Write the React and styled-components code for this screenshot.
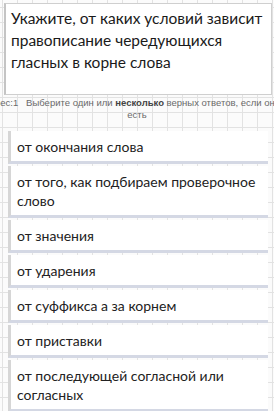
import styled, { createGlobalStyle } from "styled-components";

const GlobalStyle = createGlobalStyle`
  html, body {
    margin: 0;
    padding: 0;
  }
  body {
    width: 274px;
    min-height: 411px;
    overflow: hidden;
    font-family: "Open Sans", "Noto Sans", sans-serif;
    background-color: #fbfbfb;
    background-image:
      linear-gradient(to right, #e2e2e2 1px, transparent 1px),
      linear-gradient(to bottom, #e2e2e2 1px, transparent 1px);
    background-size: 15px 15px;
    background-position: 2px 7px;
  }
`;

const answers = [
  "от окончания слова",
  "от того, как подбираем проверочное слово",
  "от значения",
  "от ударения",
  "от суффикса а за корнем",
  "от приставки",
  "от последующей согласной или согласных",
];

export default function App() {
  return (
    <>
      <GlobalStyle />
      <Page>
        <Question>
          Укажите, от каких условий зависит правописание чередующихся гласных в
          корне слова
        </Question>
        <Hint>
          Вес:1&nbsp;&nbsp; Выберите один или <b>несколько</b> верных ответов,
          если они
          <br />
          есть
        </Hint>
        <Answers>
          {answers.map((text) => (
            <Answer key={text}>{text}</Answer>
          ))}
        </Answers>
      </Page>
    </>
  );
}

const Page = styled.div`
  display: flex;
  flex-direction: column;
  padding-top: 3px;
`;

const Question = styled.div`
  box-sizing: border-box;
  margin-left: 4px;
  width: 268px;
  height: 92px;
  padding: 3px 6px 0 5px;
  background: #fff;
  border: 1px solid #cfcfcf;
  border-left: 2px solid #c4c4c4;
  font-family: "Lato", "Open Sans", sans-serif;
  font-size: 15.5px;
  line-height: 22px;
  color: #1a1a1a;
`;

const Hint = styled.div`
  margin: 2px 0 0 -23px;
  width: 320px;
  text-align: center;
  white-space: nowrap;
  font-family: "Liberation Sans", Arial, sans-serif;
  font-size: 9.5px;
  line-height: 12px;
  color: #6a6a6a;

  b {
    color: #444;
  }
`;

const Answers = styled.div`
  display: flex;
  flex-direction: column;
  gap: 2px;
  margin: 10px 0 0 8px;
  width: 260px;
`;

const Answer = styled.div`
  box-sizing: border-box;
  padding: 6px 6px 5px 6px;
  background: #fff;
  border-left: 3px solid #d6d6d6;
  border-bottom: 3px solid #d4d8e4;
  font-family: "Lato", "Open Sans", sans-serif;
  font-size: 14px;
  line-height: 19px;
  color: #222;
`;
